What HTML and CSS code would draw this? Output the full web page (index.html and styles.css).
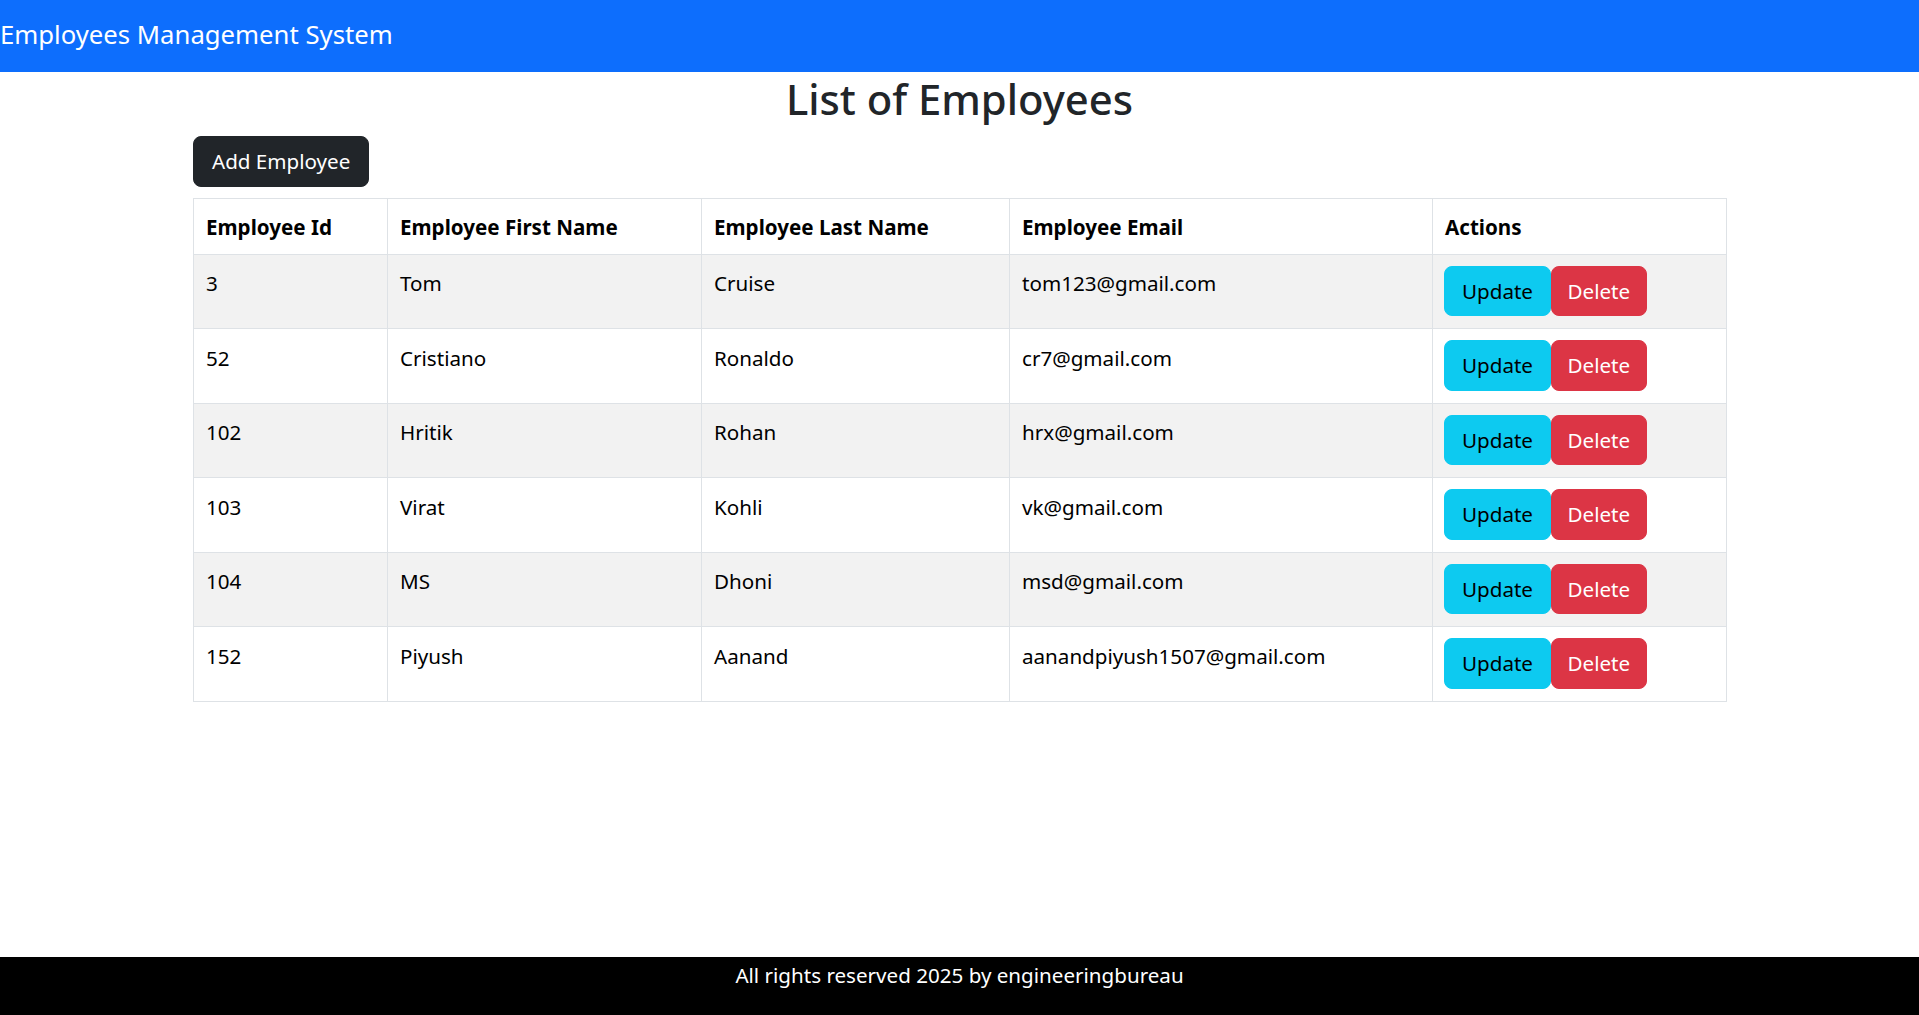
FILE: index.html
```html
<!DOCTYPE html>
<html lang="en">
<head>
<meta charset="utf-8">
<title>Employees Management System</title>
<link rel="stylesheet" href="styles.css">
</head>
<body>
<header class="navbar">
  <span class="brand">Employees Management System</span>
</header>
<main class="content">
  <h2 class="title">List of Employees</h2>
  <div class="toolbar">
    <button class="btn btn-dark">Add Employee</button>
  </div>
  <table class="table">
    <colgroup>
      <col class="c1"><col class="c2"><col class="c3"><col class="c4"><col class="c5">
    </colgroup>
    <thead>
      <tr>
        <th>Employee Id</th>
        <th>Employee First Name</th>
        <th>Employee Last Name</th>
        <th>Employee Email</th>
        <th>Actions</th>
      </tr>
    </thead>
    <tbody>
      <tr><td>3</td><td>Tom</td><td>Cruise</td><td>tom123@gmail.com</td><td class="actions"><button class="btn btn-info">Update</button><button class="btn btn-danger">Delete</button></td></tr>
      <tr><td>52</td><td>Cristiano</td><td>Ronaldo</td><td>cr7@gmail.com</td><td class="actions"><button class="btn btn-info">Update</button><button class="btn btn-danger">Delete</button></td></tr>
      <tr><td>102</td><td>Hritik</td><td>Rohan</td><td>hrx@gmail.com</td><td class="actions"><button class="btn btn-info">Update</button><button class="btn btn-danger">Delete</button></td></tr>
      <tr><td>103</td><td>Virat</td><td>Kohli</td><td>vk@gmail.com</td><td class="actions"><button class="btn btn-info">Update</button><button class="btn btn-danger">Delete</button></td></tr>
      <tr><td>104</td><td>MS</td><td>Dhoni</td><td>msd@gmail.com</td><td class="actions"><button class="btn btn-info">Update</button><button class="btn btn-danger">Delete</button></td></tr>
      <tr><td>152</td><td>Piyush</td><td>Aanand</td><td>aanandpiyush1507@gmail.com</td><td class="actions"><button class="btn btn-info">Update</button><button class="btn btn-danger">Delete</button></td></tr>
    </tbody>
  </table>
</main>
<footer class="footer">
  <span class="footer-text">All rights reserved 2025 by engineeringbureau</span>
</footer>
</body>
</html>
```

FILE: styles.css
```css
* { box-sizing: border-box; }
html, body { margin: 0; padding: 0; }
body {
  font-family: "Noto Sans", "Open Sans", sans-serif;
  font-size: 20.6px;
  line-height: 1.5;
  color: #212529;
  background: #fff;
  min-height: 1015px;
  display: flex;
  flex-direction: column;
}
.navbar {
  height: 72px;
  padding-bottom: 2px;
  background: #0d6efd;
  display: flex;
  align-items: center;
}
.brand {
  color: #fff;
  font-size: 25.7px;
  line-height: 1.5;
}
.content {
  flex: 1;
  width: 1533px;
  margin: 0 auto;
}
.title {
  margin: 1.5px 0 0;
  text-align: center;
  font-size: 41.8px;
  font-weight: 500;
  line-height: 1.2;
  color: #212529;
}
.toolbar {
  margin-top: 12.5px;
  margin-bottom: 11px;
}
.btn {
  font-family: inherit;
  font-size: 20.6px;
  line-height: 32px;
  padding: 0 17px;
  border: 1px solid transparent;
  border-radius: 8px;
  height: 50.5px;
  cursor: pointer;
  vertical-align: top;
}
.btn-dark { background: #212529; border-color: #212529; color: #fff; padding: 0 18px; }
.btn-info { background: #0dcaf0; border-color: #0dcaf0; color: #000; padding: 0 17px; }
.btn-danger { background: #dc3545; border-color: #dc3545; color: #fff; padding: 0 15.5px; }
.table {
  width: 1533px;
  table-layout: fixed;
  border-collapse: collapse;
  color: #000;
}
.c1 { width: 194px; }
.c2 { width: 314px; }
.c3 { width: 308px; }
.c4 { width: 423px; }
.c5 { width: 294px; }
.table th, .table td {
  border: 1px solid #dee2e6;
  padding: 12.5px 12px 10.5px;
  text-align: left;
  vertical-align: top;
  line-height: 32px;
}
.table td.actions {
  padding: 11px 12px 12px 11px;
  white-space: nowrap;
}
.table th { font-weight: 700; }
.table tbody tr:nth-child(odd) td { background: #f2f2f2; }
.footer {
  height: 58px;
  background: #000;
  color: #fff;
  text-align: center;
  padding-top: 3px;
}
.footer-text { font-size: 20.6px; line-height: 1.5; }
```
